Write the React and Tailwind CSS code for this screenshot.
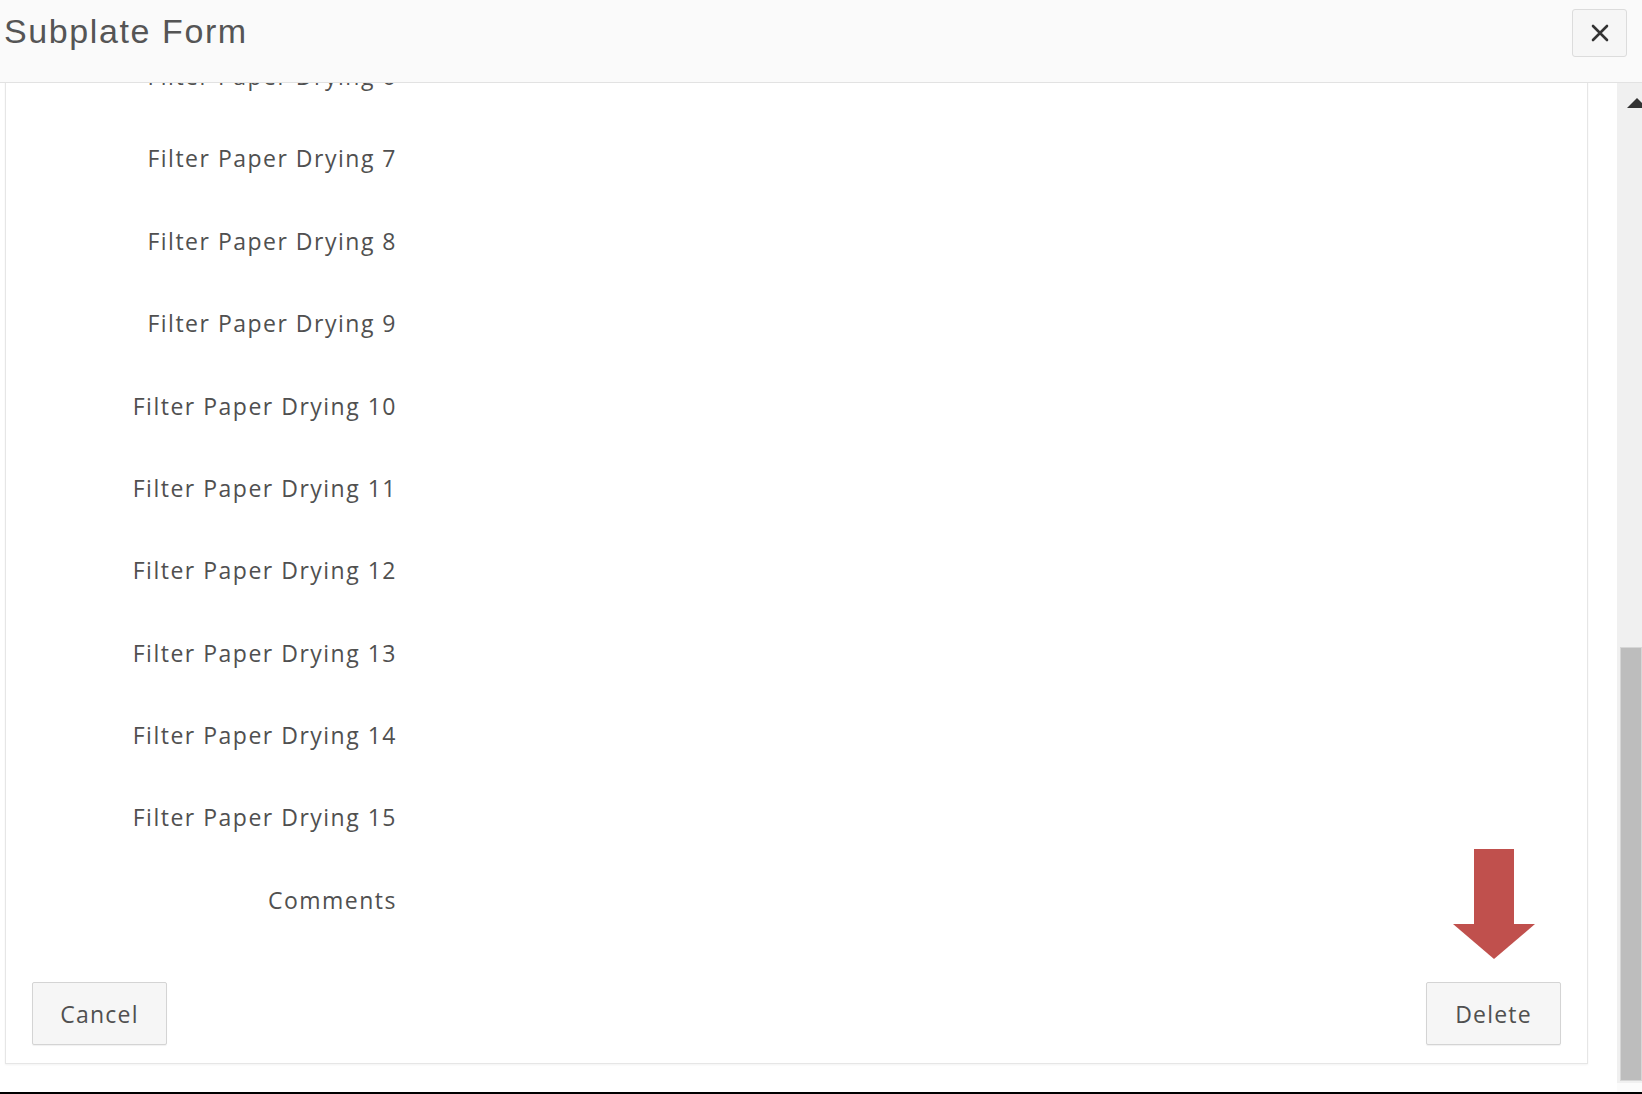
import React from 'react';

const labels = [
    'Filter Paper Drying 6',
    'Filter Paper Drying 7',
    'Filter Paper Drying 8',
    'Filter Paper Drying 9',
    'Filter Paper Drying 10',
    'Filter Paper Drying 11',
    'Filter Paper Drying 12',
    'Filter Paper Drying 13',
    'Filter Paper Drying 14',
    'Filter Paper Drying 15',
    'Comments',
];

const labelFont = { fontFamily: '"Open Sans", "Noto Sans", sans-serif' };

const FormButton = ({ children }) => (
    <button
        type="button"
        className="h-[63px] w-[135px] rounded-[2px] border border-[#d4d4d4] bg-[#f6f6f6] text-[23px] tracking-[1.2px] text-[#505050] shadow-[0_1px_1px_rgba(0,0,0,0.06)]"
        style={labelFont}
    >
        {children}
    </button>
);

const DownArrow = () => (
    <svg width="82" height="110" viewBox="0 0 82 110" className="absolute right-[52px] top-[-92px]">
        <rect x="21" y="0" width="40" height="76" fill="#c0504d" />
        <polygon points="0,75 82,75 41,110" fill="#c0504d" />
    </svg>
);

const Scrollbar = () => (
    <div className="flex w-[25px] flex-col">
        <div className="relative h-[1000px] overflow-hidden bg-[#f0f0f0]">
            <svg width="20" height="10" viewBox="0 0 20 10" className="absolute left-[10px] top-[15px]">
                <polygon points="0,10 10,0 20,10" fill="#333" />
            </svg>
            <div className="absolute bottom-[2px] left-[3px] right-0 top-[564px] border border-[#d6d6d6] bg-[#bdbdbd]" />
        </div>
        <div className="flex-1 bg-[#fbfbfb]" />
    </div>
);

export default function App() {
    return (
        <div className="flex h-[1094px] w-full flex-col overflow-hidden border-b-2 border-black bg-white">
            <div className="relative z-10 flex h-[83px] shrink-0 items-start justify-between border-b border-[#e2e2e2] bg-[#fafafa]">
                <h1
                    className="ml-[4px] mt-[6px] text-[34px] tracking-[1.6px] text-[#555]"
                    style={{ fontFamily: '"Liberation Sans", Arial, sans-serif' }}
                >
                    Subplate Form
                </h1>
                <button
                    type="button"
                    className="mr-[15px] mt-[9px] flex h-[48px] w-[55px] items-center justify-center rounded-[3px] border border-[#dcdcdc] bg-[#f6f6f6]"
                >
                    <svg width="20" height="20" viewBox="0 0 20 20">
                        <path d="M3 3 L17 17 M17 3 L3 17" stroke="#333" strokeWidth="2.6" strokeLinecap="round" />
                    </svg>
                </button>
            </div>

            <div className="flex flex-1 overflow-hidden">
                <div className="flex-1 overflow-hidden pl-[5px] pr-[29px]">
                    <div className="border-x border-b border-[#e6e6e6] shadow-[0_1px_2px_rgba(0,0,0,0.05)]">
                        <div className="mt-[-48px]">
                            {labels.map((label) => (
                                <div key={label} className="flex h-[82.4px] items-center">
                                    <div
                                        className="w-[391px] text-right text-[23px] tracking-[1.5px] text-[#505050]"
                                        style={labelFont}
                                    >
                                        {label}
                                    </div>
                                </div>
                            ))}
                        </div>
                        <div className="relative flex justify-between px-[26px] pb-[18px] pt-[41px]">
                            <FormButton>Cancel</FormButton>
                            <FormButton>Delete</FormButton>
                            <DownArrow />
                        </div>
                    </div>
                </div>
                <Scrollbar />
            </div>
        </div>
    );
}
